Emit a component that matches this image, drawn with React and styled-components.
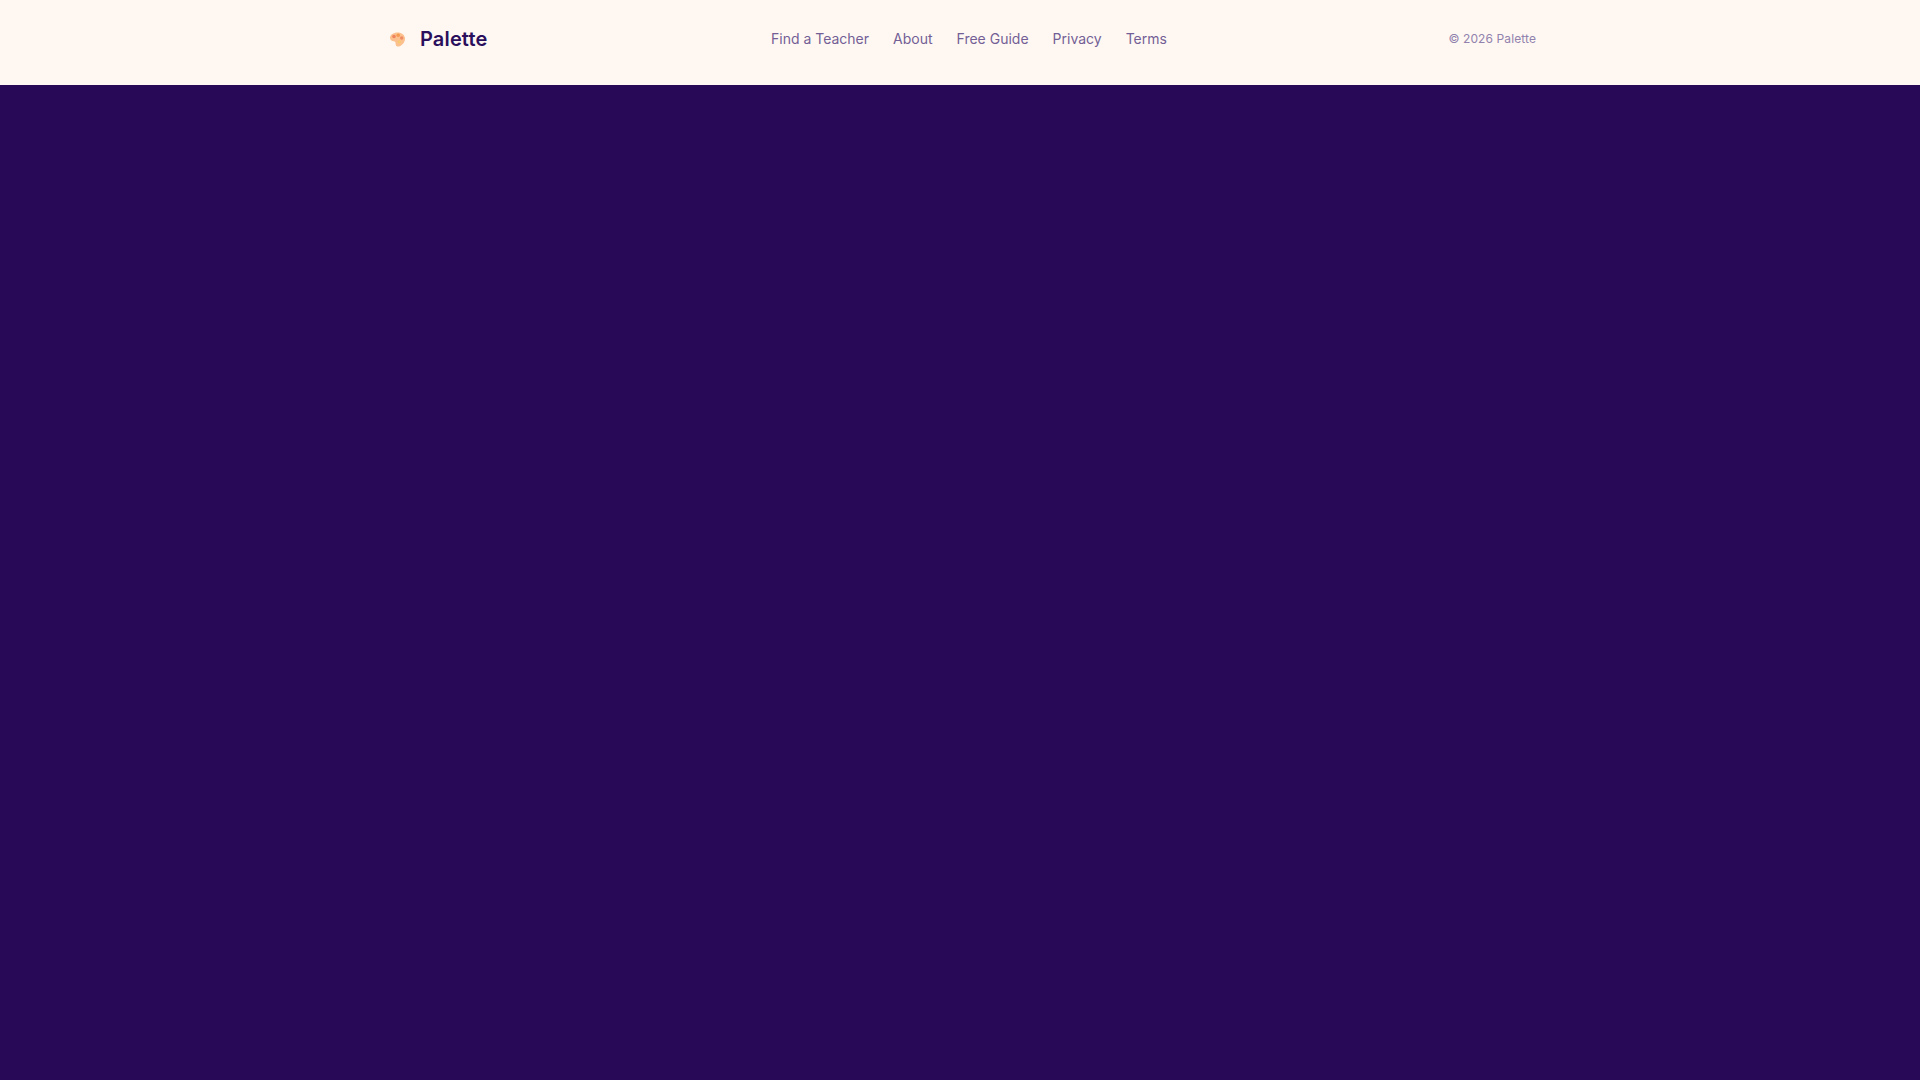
import React from "react";
import styled, { createGlobalStyle } from "styled-components";

const GlobalStyle = createGlobalStyle`
  html, body {
    margin: 0;
    height: 100%;
    background: #270957;
    font-family: "Inter", "Noto Sans", sans-serif;
  }
`;

const Page = styled.div`
  min-height: 100vh;
  display: flex;
  flex-direction: column;
  background: #270957;
`;

const Header = styled.header`
  height: 85px;
  background: #fff8f2;
`;

const Inner = styled.div`
  width: 1152px;
  height: 77px;
  margin: 0 auto;
  display: grid;
  grid-template-columns: 387px 1fr auto;
  align-items: center;
`;

const Brand = styled.a`
  display: flex;
  align-items: center;
  gap: 14px;
  padding: 1px 0 0 5px;
  font-size: 20px;
  font-weight: 600;
  letter-spacing: 0.15px;
  color: #2a0f5c;
`;

const Nav = styled.nav`
  display: flex;
  gap: 24px;
`;

const NavLink = styled.a`
  font-size: 14px;
  font-weight: 400;
  color: #735f96;
`;

const Copyright = styled.span`
  font-size: 12px;
  letter-spacing: 0.1px;
  color: #9182ae;
`;

const PaletteIcon = () => (
  <svg width="17" height="17" viewBox="0 0 17 17">
    <path d="M8.500 1.500C4.500 1.500 1 3.800 1 6.800c0 2.200 1.800 3.400 3.600 3.400 1.300 0 2 .8 2 2.200 0 1.800.7 3.100 2.100 3.100C12.500 15.500 16 11.600 16 7.700 16 4 12.700 1.500 8.500 1.500z" fill="#fbc08e" />
    <circle cx="5" cy="5.500" r="1.800" fill="#ef8560" />
    <circle cx="9.200" cy="4.300" r="1.800" fill="#f59a52" />
    <circle cx="12.700" cy="7" r="1.700" fill="#ee8a64" />
    <circle cx="10.300" cy="10.800" r="1.600" fill="#f8c96f" />
  </svg>
);

const links = ["Find a Teacher", "About", "Free Guide", "Privacy", "Terms"];

export default function App() {
  return (
    <Page>
      <GlobalStyle />
      <Header>
        <Inner>
          <Brand>
            <PaletteIcon />
            Palette
          </Brand>
          <Nav>
            {links.map((link) => (
              <NavLink key={link}>{link}</NavLink>
            ))}
          </Nav>
          <Copyright>© 2026 Palette</Copyright>
        </Inner>
      </Header>
    </Page>
  );
}
